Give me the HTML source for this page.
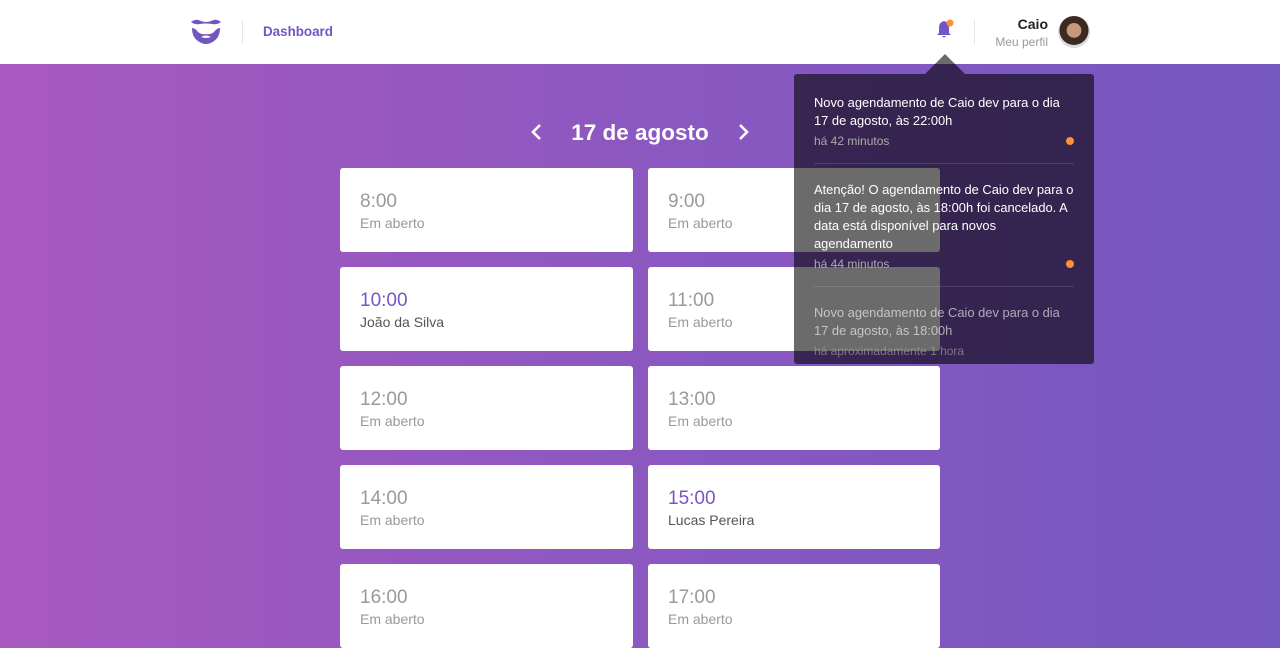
<!DOCTYPE html>
<html><head><meta charset="utf-8"><style>
*{margin:0;padding:0;box-sizing:border-box}
body{width:1280px;height:640px;overflow:hidden;font-family:"Liberation Sans",sans-serif;background:linear-gradient(90deg,#a958c1 0%,#8b58c0 50%,#7457bf 100%);position:relative}
.hdr{position:absolute;left:0;top:0;width:1280px;height:64px;background:#fff}
.sep{position:absolute;top:20px;width:1px;height:24px;background:#e6e6e6}
.card{position:absolute;width:293px;height:84px;background:#fff;border-radius:3px;padding:23px 20px}
.card .t{font-size:19px;color:#999;line-height:22px}
.card .s{font-size:14px;color:#999;margin-top:2px}
.card.b .t{color:#7a55c3}
.card.b .s{color:#555}
.pop{position:absolute;left:794px;top:74px;width:300px;height:290px;background:rgba(0,0,0,.58);border-radius:3px;overflow:hidden;padding:0 20px}
.arr{position:absolute;left:925px;top:54px;width:0;height:0;border-left:20px solid transparent;border-right:20px solid transparent;border-bottom:20px solid rgba(0,0,0,.58)}
.it{position:relative;border-bottom:1px solid rgba(255,255,255,.12);padding:20px 0 15px}
.it p{color:#fff;font-size:12.9px;line-height:18px;white-space:nowrap}
.it small{display:block;color:#aaa;font-size:12px;margin-top:4px}
.dot{position:absolute;right:0;width:8px;height:8px;border-radius:50%;background:#ff8f33}
</style></head><body>
<div class="hdr">
<svg style="position:absolute;left:190px;top:19px" width="32" height="26" viewBox="0 0 32 26"><path d="M1 3 Q6 -1 11 2 Q16 4 21 2 Q26 -1 31 3 Q27 6 22 5 Q16 4 10 5 Q5 6 1 3Z" fill="#7355c2"/><path d="M2 9 Q5 9 8 13 Q12 16 16 15 Q20 16 24 13 Q27 9 30 9 Q30 18 24 22 Q20 25 16 25 Q12 25 8 22 Q2 18 2 9Z" fill="#7355c2"/><path d="M11 18 Q16 15 21 18 Q16 20 11 18Z" fill="#fff"/></svg>
<div class="sep" style="left:242px"></div>
<div style="position:absolute;left:263px;top:24px;font-size:13.4px;font-weight:bold;color:#7355c2">Dashboard</div>
<svg style="position:absolute;left:935px;top:19px" width="20" height="22" viewBox="0 0 20 22"><path d="M9 2 Q4 3 4 9 L4 14 L2 16 L16 16 L14 14 L14 9 Q14 3 9 2Z" fill="#7355c2"/><path d="M7 17 Q9 20 11 17Z" fill="#7355c2"/><circle cx="15" cy="4" r="3.5" fill="#ff8f33"/></svg>
<div class="sep" style="left:974px"></div>
<div style="position:absolute;right:232px;top:16px;text-align:right"><div style="font-size:14px;font-weight:bold;color:#222">Caio</div><div style="font-size:12px;color:#999;margin-top:3px">Meu perfil</div></div>
<div style="position:absolute;left:1058px;top:16px;width:32px;height:32px;border-radius:50%;background:radial-gradient(circle at 50% 45%,#c9987a 0 30%,#3a2a22 32% 60%,#ddd 62%)"></div>
</div>
<div style="position:absolute;left:0;width:1280px;top:120px;text-align:center;color:#fff;font-size:22.5px;font-weight:bold">17 de agosto</div>
<svg style="position:absolute;left:530px;top:123px" width="14" height="18"><path d="M10 2 L3 9 L10 16" stroke="#fff" stroke-width="2.6" fill="none"/></svg>
<svg style="position:absolute;left:736px;top:123px" width="14" height="18"><path d="M4 2 L11 9 L4 16" stroke="#fff" stroke-width="2.6" fill="none"/></svg>
<div class="card" style="left:340px;top:168px"><div class="t">8:00</div><div class="s">Em aberto</div></div>
<div class="card" style="left:648px;top:168px;width:292px"><div class="t">9:00</div><div class="s">Em aberto</div></div>
<div class="card b" style="left:340px;top:267px"><div class="t">10:00</div><div class="s">João da Silva</div></div>
<div class="card" style="left:648px;top:267px;width:292px"><div class="t">11:00</div><div class="s">Em aberto</div></div>
<div class="card" style="left:340px;top:366px"><div class="t">12:00</div><div class="s">Em aberto</div></div>
<div class="card" style="left:648px;top:366px;width:292px"><div class="t">13:00</div><div class="s">Em aberto</div></div>
<div class="card" style="left:340px;top:465px"><div class="t">14:00</div><div class="s">Em aberto</div></div>
<div class="card b" style="left:648px;top:465px;width:292px"><div class="t">15:00</div><div class="s">Lucas Pereira</div></div>
<div class="card" style="left:340px;top:564px"><div class="t">16:00</div><div class="s">Em aberto</div></div>
<div class="card" style="left:648px;top:564px;width:292px"><div class="t">17:00</div><div class="s">Em aberto</div></div>
<div class="arr"></div>
<div class="pop">
<div class="it"><p>Novo agendamento de Caio dev para o dia<br>17 de agosto, às 22:00h</p><small>há 42 minutos</small><span class="dot" style="bottom:18px"></span></div>
<div class="it" style="padding-top:17px"><p>Atenção! O agendamento de Caio dev para o<br>dia 17 de agosto, às 18:00h foi cancelado. A<br>data está disponível para novos<br>agendamento</p><small>há 44 minutos</small><span class="dot" style="bottom:18px"></span></div>
<div class="it" style="opacity:.6;border:none;padding-top:17px"><p>Novo agendamento de Caio dev para o dia<br>17 de agosto, às 18:00h</p><small>há aproximadamente 1 hora</small></div>
</div>
</body></html>
